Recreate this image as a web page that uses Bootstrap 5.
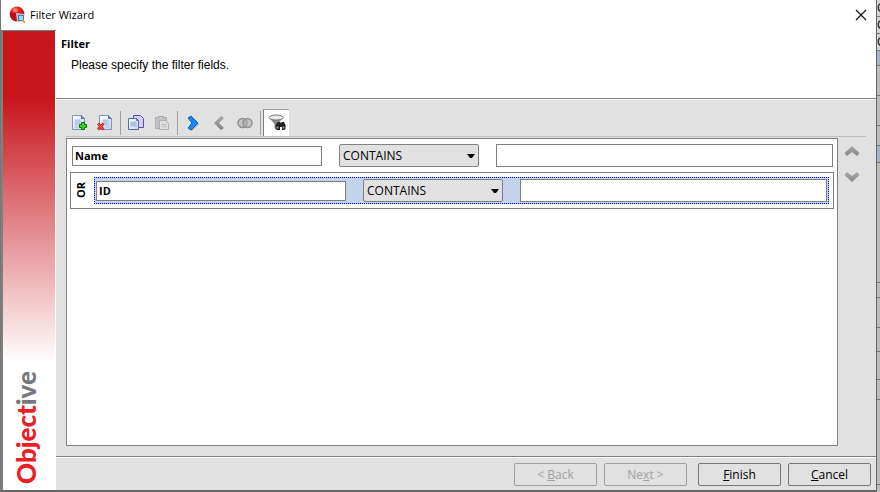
<!DOCTYPE html>
<html lang="en">
<head>
<meta charset="utf-8">
<meta name="viewport" content="width=device-width, initial-scale=1">
<title>Filter Wizard</title>
<link href="https://cdn.jsdelivr.net/npm/bootstrap@5.3.0/dist/css/bootstrap.min.css" rel="stylesheet">
<style>
  body { font: 12px/16px "Open Sans", "Noto Sans", sans-serif; color: #000; background: #b8b8b8; }
  .dialog { background: #e1e1e1; border-left: 1px solid #777; border-right: 1px solid #666; border-bottom: 2px solid #666; }
  .titlebar { height: 30px; padding: 0 8px; gap: 4px; background: #fff; }
  .title-label { font-size: 11px; }
  .close-btn { width: 14px; height: 14px; }
  .brand-rail { width: 55px; padding: 0 1px 6px 0; border-left: 2px solid #808080; border-top: 1px solid #808080; background: #fff; }
  .brand-fade { flex: 1; background: linear-gradient(#c8161d 0, #c8161d 20%, #fff 100%); border-top: 1px solid #a0282c; }
  .brand-word { writing-mode: vertical-rl; transform: rotate(180deg); font: 900 26px/32px Lato, sans-serif; color: #ee1c25; margin-right: 7px; }
  .brand-word span { color: #77787b; }
  .intro { height: 69px; padding: 6px 5px; background: #fff; border-bottom: 1px solid #808080; }
  .intro h1 { font: bold 11px/16px "Open Sans", sans-serif; margin: 0 0 5px; }
  .intro p { font: 12px/16px "Liberation Sans", Arial, sans-serif; margin: 0 0 0 10px; }
  .content { border-top: 1px solid #fff; padding: 9px 10px 10px; }
  .tools { height: 28px; border-bottom: 1px solid #bebebe; }
  .tool { width: 26px; height: 27px; flex: none; }
  .tool svg { display: block; margin: 0 auto; }
  .tool.picked { background: #fff; border: 0; border-left: 1px solid #808080; border-top: 1px solid #a0a0a0; }
  .rule { width: 1px; height: 24px; margin: 0 2px; background: #a0a0a0; }
  .filter-area { padding-top: 1px; }
  .filters { background: #fff; border: 1px solid #808080; padding: 5px 3px; }
  .field { height: 23px; border: 1px solid #808080; border-radius: 0; padding: 0 3px; font: 12px/16px "Open Sans", sans-serif; background: #fff; color: #000; min-width: 0; }
  .field.name { width: 250px; height: 20px; padding: 0 2px; font-weight: bold; font-size: 11px; }
  .operator { appearance: none; width: 140px; height: 23px; border: 1px solid #808080; border-radius: 2px; padding: 0 20px 0 3px; font: 12px/16px "Open Sans", sans-serif; color: #000;
    background: #e1e1e1 url("data:image/svg+xml,%3Csvg xmlns='http://www.w3.org/2000/svg' viewBox='0 0 8 4'%3E%3Cpath d='M0 0h8L5 4H3z'/%3E%3C/svg%3E") no-repeat right 3px center / 8px 4px; }
  .filter-row { gap: 17px; }
  .filter-row.first { padding: 0 1px 0 2px; }
  .group { height: 37px; margin-top: 5px; border: 1px solid #808080; padding: 0 4px 0 0; }
  .joiner { width: 23px; padding-right: 4px; }
  .joiner span { writing-mode: vertical-rl; transform: rotate(180deg); font: bold 11px/16px "Open Sans", sans-serif; }
  .selected-row { height: 27px; background: #c3d3eb; border: 1px dotted #0000d8; padding: 0 1px; }
  .movers { width: 28px; padding-top: 5px; gap: 10px; }
  .mover { width: 18px; height: 16px; }
  .footer-bar { border-top: 1px solid #808080; }
  .footer-edge { border-top: 1px solid #fff; padding: 5px 5px 4px; gap: 7px; }
  .nav-btn { width: 83px; height: 23px; padding: 0; border: 1px solid #777; border-radius: 2px; background: #e1e1e1; color: #000; font: 12px/16px "Open Sans", sans-serif; }
  .nav-btn:disabled { color: #a0a0a0; border-color: #a0a0a0; background: #e1e1e1; opacity: 1; }
  .backdrop-strip { width: 3px; font: 12px/16px "Liberation Sans", sans-serif; color: #111; background: #bcbcbc; }
  .slice { border-bottom: 1px solid #777; }
  .s18 { height: 17px; background: #d5d5d5; }
  .s15 { height: 15px; background: #a5b4cb; }
  .s17 { height: 17px; background: #a5b4cb; }
  .s30 { height: 30px; } .s20 { height: 20px; } .s119 { height: 120px; } .s15g { height: 15px; } .s25 { height: 24px; } .s28 { height: 28px; } .s85 { height: 85px; }
</style>
<script src="https://cdn.jsdelivr.net/npm/bootstrap@5.3.0/dist/js/bootstrap.bundle.min.js"></script>
</head>
<body>
<svg class="position-absolute" width="0" height="0" aria-hidden="true">
  <defs>
    <linearGradient id="paper" x2="1" y2="1"><stop stop-color="#fff"/><stop offset="1" stop-color="#c5d3ee"/></linearGradient>
    <linearGradient id="steel" y2="1" x2="0"><stop stop-color="#aaa"/><stop offset="1" stop-color="#858585"/></linearGradient>
  </defs>
</svg>
<div class="d-flex vh-100">
  <main class="dialog d-flex flex-column flex-grow-1">
    <header class="titlebar d-flex align-items-center">
      <svg width="17" height="18" viewBox="0 0 17 18" aria-hidden="true">
        <defs><radialGradient id="ball" cx=".38" cy=".25" r=".8"><stop stop-color="#ff9c8c"/><stop offset=".3" stop-color="#e82820"/><stop offset="1" stop-color="#95090b"/></radialGradient></defs>
        <circle cx="8" cy="8" r="7.4" fill="url(#ball)"/>
        <path d="M1 6l6 1v8C3 14 1 11 1 6z" fill="#bd1114"/>
        <path d="M7 7l8 1v7l-7 1z" fill="#b9bfe0"/>
        <rect x="9.5" y="9.5" width="5" height="5" fill="#8fdcfa" stroke="#5b6fa8"/>
        <path d="M13.5 14.5l2.500 2" stroke="#f4a13b" stroke-width="2"/>
      </svg>
      <span class="title-label">Filter Wizard</span>
      <button type="button" class="close-btn btn p-0 border-0 ms-auto d-flex align-items-center justify-content-center" aria-label="Close">
        <svg width="12" height="12" viewBox="0 0 12 12"><path d="M1 1l10 10M11 1L1 11" stroke="#111" stroke-width="1.2"/></svg>
      </button>
    </header>
    <div class="d-flex flex-grow-1">
      <aside class="brand-rail d-flex flex-column align-items-stretch flex-shrink-0">
        <div class="brand-fade"></div>
        <div class="d-flex justify-content-center pt-2"><div class="brand-word">Object<span>ive</span></div></div>
      </aside>
      <div class="d-flex flex-column flex-grow-1">
        <section class="intro">
          <h1>Filter</h1>
          <p>Please specify the filter fields.</p>
        </section>
        <section class="content d-flex flex-column flex-grow-1">
          <div class="tools d-flex align-items-center" role="toolbar" aria-label="Filter tools">
            <button type="button" class="tool btn border-0 rounded-0 p-0" aria-label="Add filter">
              <svg width="18" height="18" viewBox="0 0 18 18"><path d="M2.5 1.5h9l3 3v11h-12z" fill="url(#paper)" stroke="#8494b8"/><path d="M11.5 1.500v3h3" fill="#7c8cae" stroke="#5e6f95"/><path d="M4.5 5.500h6v6h-6z" fill="#b9c9ea"/><path d="M4.5 13h4" stroke="#a9bbdf"/><path d="M9.5 10.500h2v-2h3v2h2v3h-2v2h-3v-2h-2z" fill="#39d51f" stroke="#087307"/></svg>
            </button>
            <button type="button" class="tool btn border-0 rounded-0 p-0" aria-label="Remove filter">
              <svg width="18" height="18" viewBox="0 0 18 18"><path d="M3.5 1.5h9l3 3v11h-12z" fill="url(#paper)" stroke="#8494b8"/><path d="M12.5 1.500v3h3" fill="#7c8cae" stroke="#5e6f95"/><path d="M6.5 5.500h6v6h-6z" fill="#b9c9ea"/><path d="M9 13h4" stroke="#a9bbdf"/><path d="M2 9.5l5.500 6M7.500 9.500L2 15.500" stroke="#c92715" stroke-width="2.600"/><path d="M2.5 10l4.500 5M7 10l-4.500 5" stroke="#ff6048"/></svg>
            </button>
            <span class="rule"></span>
            <button type="button" class="tool btn border-0 rounded-0 p-0" aria-label="Copy">
              <svg width="18" height="18" viewBox="0 0 18 18"><path d="M6.5 1.5h7l3 3v9h-10z" fill="#d5cfff" stroke="#5c4a9f"/><path d="M1.5 4.5h8l2 2v9h-10z" fill="url(#paper)" stroke="#526d9e"/><path d="M9.5 4.5v2h2" fill="none" stroke="#526d9e"/><path d="M3.5 7.5h6v5h-6z" fill="#a9bde6"/></svg>
            </button>
            <button type="button" class="tool btn border-0 rounded-0 p-0" aria-label="Paste">
              <svg width="18" height="18" viewBox="0 0 18 18"><path d="M2.5 3.5h11v11h-11z" fill="#c2c2c2" stroke="#b0b0b0"/><path d="M5.5 4.500v-2h5v2" fill="#ccc" stroke="#a5a5a5"/><path d="M6.5 6.500h6l3 3v6h-9z" fill="#ddd" stroke="#b0b0b0"/><path d="M8.5 10.500h5M8.500 12.500h5" stroke="#bcbcbc"/></svg>
            </button>
            <span class="rule"></span>
            <button type="button" class="tool btn border-0 rounded-0 p-0" aria-label="Indent">
              <svg width="16" height="18" viewBox="0 0 16 18"><path d="M3 4l3-2 7 7-7 7-3-2 4-5z" fill="#777" opacity=".5" transform="translate(1 1)"/><path d="M3 4l3-2 7 7-7 7-3-2 4-5z" fill="#1688f5" stroke="#0864bd"/></svg>
            </button>
            <button type="button" class="tool btn border-0 rounded-0 p-0" aria-label="Outdent">
              <svg width="16" height="18" viewBox="0 0 16 18"><path d="M13 4l-3-2-7 7 7 7 3-2-5-5z" fill="url(#steel)"/></svg>
            </button>
            <button type="button" class="tool btn border-0 rounded-0 p-0" aria-label="Combine">
              <svg width="18" height="18" viewBox="0 0 18 18"><g fill="#aaa" fill-opacity=".5" stroke="#909090" stroke-width="1.5"><circle cx="6.5" cy="9" r="4.5"/><circle cx="11.5" cy="9" r="4.5"/></g></svg>
            </button>
            <span class="rule"></span>
            <button type="button" class="tool picked btn rounded-0 p-0" aria-label="Preview filter">
              <svg width="18" height="18" viewBox="0 0 18 18"><path d="M1 3.5L6.500 10v4l3 1v-5L15.500 3.500z" fill="#888"/><ellipse cx="8.2" cy="3.5" rx="7.2" ry="2.5" fill="#ececec" stroke="#777"/><path d="M8 10l2-2h2l1 1 1-1h2l1.500 3v4l-1.500 1h-2v-3h-2v3H9l-1.500-1v-3z" fill="#222"/><circle cx="9.5" cy="13.5" r="1" fill="#9ab"/><circle cx="15.5" cy="13.5" r="1" fill="#9ab"/></svg>
            </button>
          </div>
          <div class="filter-area d-flex flex-grow-1">
            <div class="filters flex-grow-1">
              <div class="filter-row first d-flex align-items-center">
                <input class="field name" aria-label="First field" value="Name">
                <select class="operator" aria-label="First operator"><option>CONTAINS</option></select>
                <input class="field flex-grow-1" aria-label="First value">
              </div>
              <div class="group d-flex align-items-center">
                <div class="joiner d-flex justify-content-center"><span>OR</span></div>
                <div class="filter-row selected-row d-flex align-items-center flex-grow-1">
                  <input class="field name" aria-label="Second field" value="ID">
                  <select class="operator" aria-label="Second operator"><option>CONTAINS</option></select>
                  <input class="field flex-grow-1" aria-label="Second value">
                </div>
              </div>
            </div>
            <div class="movers d-flex flex-column align-items-center">
              <button type="button" class="mover btn border-0 p-0 d-flex" aria-label="Move up"><svg width="18" height="16" viewBox="0 0 18 16"><path d="M9 3l7.500 7-2.500 3-5-4-5 4-2.500-3z" fill="url(#steel)"/></svg></button>
              <button type="button" class="mover btn border-0 p-0 d-flex" aria-label="Move down"><svg width="18" height="16" viewBox="0 0 18 16"><path d="M9 13l7.500-7L14 3 9 7 4 3 1.500 6z" fill="url(#steel)"/></svg></button>
            </div>
          </div>
        </section>
        <footer class="footer-bar">
          <div class="footer-edge d-flex justify-content-end">
            <button type="button" class="nav-btn btn" disabled>&lt; <u>B</u>ack</button>
            <button type="button" class="nav-btn btn me-1" disabled>Ne<u>x</u>t &gt;</button>
            <button type="button" class="nav-btn btn"><u>F</u>inish</button>
            <button type="button" class="nav-btn btn"><u>C</u>ancel</button>
          </div>
        </footer>
      </div>
    </div>
  </main>
  <div class="backdrop-strip flex-shrink-0 overflow-hidden" aria-hidden="true">
    <div class="slice s18">C</div><div class="slice s18">C</div><div class="slice s18">C</div><div class="slice s15"></div>
    <div class="slice s30"></div><div class="slice s30"></div><div class="slice s20"></div><div class="slice s17"></div>
    <div class="slice s119"></div><div class="slice s15g"></div><div class="slice s30"></div><div class="slice s25"></div><div class="slice s28"></div><div class="slice s20"></div><div class="slice s85"></div>
  </div>
</div>
</body>
</html>
